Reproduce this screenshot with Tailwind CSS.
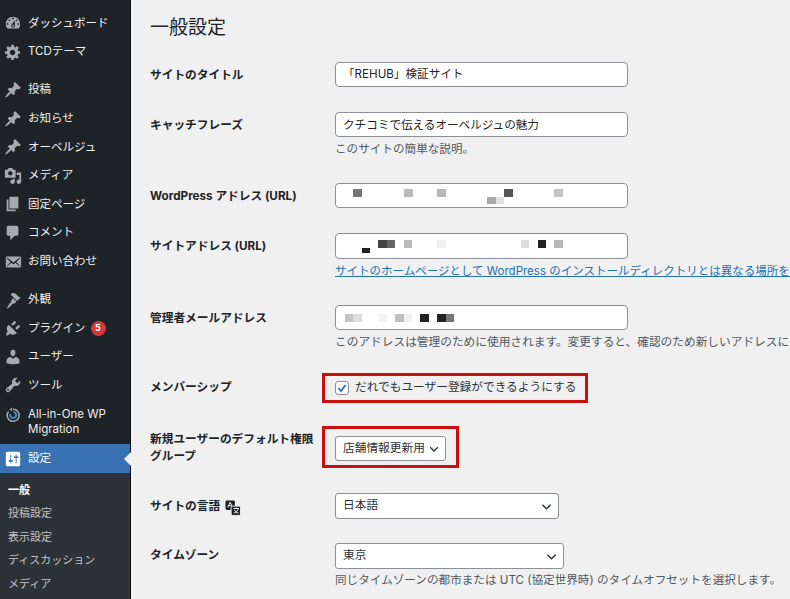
<!DOCTYPE html>
<html lang="ja">
<head>
    <meta charset="UTF-8">
    <title>一般設定</title>
    <script src="https://cdn.jsdelivr.net/npm/@tailwindcss/browser@4"></script>
</head>
<body class="w-[790px] h-[599px] overflow-hidden bg-[#f0f0f1] text-[#1d2327] font-['Inter','Noto_Sans_CJK_JP',sans-serif]">
<div class="flex h-[599px] overflow-hidden">

    <!-- Admin menu -->
    <nav class="w-[131px] shrink-0 h-full bg-[#1d2327] border-r border-[#111] pt-[9px] text-[11.5px] text-[#f0f0f1]">
        <a class="flex items-center h-[28.6px] pl-[4px] gap-[6px]">
            <svg class="w-[18px] h-[18px] shrink-0 text-[#a7aaad]" viewBox="0 0 20 20" fill="currentColor"><path d="M3.76 16h12.48c1.1-1.37 1.76-3.11 1.76-5 0-4.42-3.58-8-8-8s-8 3.58-8 8c0 1.89.66 3.63 1.76 5zM10 4c.55 0 1 .45 1 1s-.45 1-1 1-1-.45-1-1 .45-1 1-1zM6 6c.55 0 1 .45 1 1s-.45 1-1 1-1-.45-1-1 .45-1 1-1zm8 0c.55 0 1 .45 1 1s-.45 1-1 1-1-.45-1-1 .45-1 1-1zm-5.37 5.55L12 7v6c0 1.1-.9 2-2 2s-2-.9-2-2c0-.57.24-1.08.63-1.45zM4 10c.55 0 1 .45 1 1s-.45 1-1 1-1-.45-1-1 .45-1 1-1zm12 0c.55 0 1 .45 1 1s-.45 1-1 1-1-.45-1-1 .45-1 1-1zm-5 3c0-.55-.45-1-1-1s-1 .45-1 1 .45 1 1 1 1-.45 1-1z" fill-rule="evenodd"/></svg>
            <span>ダッシュボード</span>
        </a>
        <a class="flex items-center h-[28.6px] pl-[4px] gap-[6px]">
            <svg class="w-[18px] h-[18px] shrink-0 text-[#a7aaad]" viewBox="0 0 20 20" fill="currentColor"><path d="M18 12h-2.18c-.17.7-.44 1.35-.81 1.93l1.54 1.54-2.1 2.1-1.54-1.54c-.58.36-1.23.63-1.91.79V19H8v-2.18c-.68-.16-1.33-.43-1.91-.79l-1.54 1.54-2.12-2.12 1.54-1.54c-.36-.58-.63-1.23-.79-1.91H1V9.03h2.17c.16-.7.44-1.35.8-1.94L2.43 5.55l2.1-2.1 1.54 1.54c.58-.37 1.24-.64 1.93-.81V2h3v2.18c.68.16 1.33.43 1.91.79l1.54-1.54 2.12 2.12-1.54 1.54c.36.59.64 1.24.8 1.94H18V12zm-8.5 1.5c1.66 0 3-1.34 3-3s-1.34-3-3-3-3 1.34-3 3 1.34 3 3 3z"/></svg>
            <span>TCDテーマ</span>
        </a>

        <div class="mt-[9.5px]">
            <a class="flex items-center h-[28.6px] pl-[4px] gap-[6px]">
                <svg class="w-[18px] h-[18px] shrink-0 text-[#a7aaad]" viewBox="0 0 20 20" fill="currentColor"><path d="M10.44 3.02l1.82-1.82 6.36 6.35-1.83 1.82c-1.05-.68-2.48-.57-3.41.36l-.75.75c-.92.93-1.04 2.35-.35 3.41l-1.83 1.82-2.41-2.41-2.8 2.79c-.42.42-3.38 2.71-3.8 2.29s1.86-3.39 2.28-3.81l2.79-2.79L4.1 9.36l1.83-1.82c1.05.69 2.48.57 3.4-.36l.75-.75c.93-.92 1.05-2.35.36-3.41z"/></svg>
                <span>投稿</span>
            </a>
            <a class="flex items-center h-[28.6px] pl-[4px] gap-[6px]">
                <svg class="w-[18px] h-[18px] shrink-0 text-[#a7aaad]" viewBox="0 0 20 20" fill="currentColor"><path d="M10.44 3.02l1.82-1.82 6.36 6.35-1.83 1.82c-1.05-.68-2.48-.57-3.41.36l-.75.75c-.92.93-1.04 2.35-.35 3.41l-1.83 1.82-2.41-2.41-2.8 2.79c-.42.42-3.38 2.71-3.8 2.29s1.86-3.39 2.28-3.81l2.79-2.79L4.1 9.36l1.83-1.82c1.05.69 2.48.57 3.4-.36l.75-.75c.93-.92 1.05-2.35.36-3.41z"/></svg>
                <span>お知らせ</span>
            </a>
            <a class="flex items-center h-[28.6px] pl-[4px] gap-[6px]">
                <svg class="w-[18px] h-[18px] shrink-0 text-[#a7aaad]" viewBox="0 0 20 20" fill="currentColor"><path d="M10.44 3.02l1.82-1.82 6.36 6.35-1.83 1.82c-1.05-.68-2.48-.57-3.41.36l-.75.75c-.92.93-1.04 2.35-.35 3.41l-1.83 1.82-2.41-2.41-2.8 2.79c-.42.42-3.38 2.71-3.8 2.29s1.86-3.39 2.28-3.81l2.79-2.79L4.1 9.36l1.83-1.82c1.05.69 2.48.57 3.4-.36l.75-.75c.93-.92 1.05-2.35.36-3.41z"/></svg>
                <span>オーベルジュ</span>
            </a>
            <a class="flex items-center h-[28.6px] pl-[4px] gap-[6px]">
                <svg class="w-[18px] h-[18px] shrink-0 text-[#a7aaad]" viewBox="0 0 20 20" fill="currentColor"><path d="M13 11V4c0-.55-.45-1-1-1h-1.67L9 1H5L3.67 3H2c-.55 0-1 .45-1 1v7c0 .55.45 1 1 1h10c.55 0 1-.45 1-1zM7 4.500c1.380 0 2.500 1.120 2.500 2.500S8.380 9.500 7 9.500 4.500 8.380 4.500 7 5.620 4.500 7 4.500zM14 6h5v10.500c0 1.380-1.120 2.500-2.500 2.500S14 17.880 14 16.500s1.120-2.500 2.500-2.500c.17 0 .34.02.5.05V9h-3V6zm-4 8.050V13h2v3.500c0 1.380-1.120 2.500-2.500 2.500S7 17.880 7 16.500 8.120 14 9.500 14c.17 0 .34.02.5.05z" fill-rule="evenodd"/></svg>
                <span>メディア</span>
            </a>
            <a class="flex items-center h-[28.6px] pl-[4px] gap-[6px]">
                <svg class="w-[18px] h-[18px] shrink-0 text-[#a7aaad]" viewBox="0 0 20 20" fill="currentColor"><path d="M6 15V2h10v13H6zm-1 1h8v2H3V5h2v11z"/></svg>
                <span>固定ページ</span>
            </a>
            <a class="flex items-center h-[28.6px] pl-[4px] gap-[6px]">
                <svg class="w-[18px] h-[18px] shrink-0 text-[#a7aaad]" viewBox="0 0 20 20" fill="currentColor"><path d="M5 2h9c1.100 0 2 .9 2 2v7c0 1.100-.9 2-2 2h-2l-5 5v-5H5c-1.100 0-2-.9-2-2V4c0-1.100.9-2 2-2z"/></svg>
                <span>コメント</span>
            </a>
            <a class="flex items-center h-[28.6px] pl-[4px] gap-[6px]">
                <svg class="w-[18px] h-[18px] shrink-0 text-[#a7aaad]" viewBox="0 0 20 20" fill="currentColor"><path d="M19 14.500v-9c0-.83-.67-1.500-1.500-1.500H3.490c-.83 0-1.500.67-1.500 1.500v9c0 .83.67 1.500 1.500 1.500H17.500c.83 0 1.500-.67 1.500-1.500zm-1.310-9.110c.33.33.15.67-.03.84L13.600 9.950l3.900 4.060c.12.14.2.36.06.51-.13.16-.43.15-.56.05l-4.370-3.730-2.140 1.950-2.130-1.950-4.370 3.730c-.13.1-.43.11-.56-.05-.14-.15-.06-.37.06-.51l3.900-4.060-4.060-3.720c-.18-.17-.36-.51-.03-.84s.67-.17.95.07l6.240 5.040 6.250-5.040c.28-.24.62-.4.95-.07z" fill-rule="evenodd"/></svg>
                <span>お問い合わせ</span>
            </a>
        </div>

        <div class="mt-[9.5px]">
            <a class="flex items-center h-[28.6px] pl-[4px] gap-[6px]">
                <svg class="w-[18px] h-[18px] shrink-0 text-[#a7aaad]" viewBox="0 0 20 20" fill="currentColor"><path d="M14.48 11.06L7.41 3.99l1.5-1.5c.5-.56 2.3-.47 3.51.32 1.21.8 1.43 1.28 2.66 2.42 1.2 1.13 2.2 1.6 3.42 2.17zM13.7 11.8l-1.4 1.4c-.8.8-2 .6-2.8.9-.9.4-1.2 1.500-1.700 2.300-.7 1.100-3.500 2.900-5.100 3.200 1.100-1.500 2.600-4 3.200-5.200.5-.9 1.600-1.200 2-2.100.3-.8.1-2 .9-2.800l1.400-1.400z"/></svg>
                <span>外観</span>
            </a>
            <a class="flex items-center h-[28.6px] pl-[4px] gap-[6px]">
                <svg class="w-[18px] h-[18px] shrink-0 text-[#a7aaad]" viewBox="0 0 20 20" fill="currentColor"><path d="M13.11 4.360L9.870 7.600 8 5.730l3.240-3.240c.35-.34 1.050-.2 1.560.32.52.51.66 1.210.31 1.550zM17.510 8.760l-3.240 3.240-1.870-1.870 3.240-3.240c.35-.34 1.050-.2 1.560.32.52.51.66 1.210.31 1.550zM5.500 6.600l8.900 8.900-1.200.8c-2.200 1.600-4.500 1.500-6.300.1L3.300 18.500 2 17.200l2.100-3.600C2.700 11.800 2.600 9.500 4.200 7.300z"/></svg>
                <span>プラグイン</span>
                <span class="w-[15px] h-[15px] -ml-[1px] rounded-full bg-[#d63638] text-white text-[9px] font-bold flex items-center justify-center">5</span>
            </a>
            <a class="flex items-center h-[28.6px] pl-[4px] gap-[6px]">
                <svg class="w-[18px] h-[18px] shrink-0 text-[#a7aaad]" viewBox="0 0 20 20" fill="currentColor"><path d="M10 9.250c-2.270 0-2.730-3.440-2.730-3.440C7 4.020 7.820 2 9.970 2c2.160 0 2.980 2.020 2.710 3.810 0 0-.41 3.440-2.680 3.440zm0 2.570L12.720 10c2.390 0 4.520 2.330 4.520 4.530v2.490s-3.650 1.130-7.240 1.130c-3.650 0-7.240-1.130-7.240-1.130v-2.490c0-2.250 1.940-4.480 4.470-4.480z"/></svg>
                <span>ユーザー</span>
            </a>
            <a class="flex items-center h-[28.6px] pl-[4px] gap-[6px]">
                <svg class="w-[18px] h-[18px] shrink-0 text-[#a7aaad]" viewBox="0 0 20 20" fill="currentColor"><path d="M16.680 9.770c-1.340 1.340-3.300 1.670-4.950.99l-5.410 6.520c-.99.99-2.590.99-3.580 0s-.99-2.590 0-3.570l6.520-5.420c-.68-1.650-.35-3.610.99-4.950 1.280-1.280 3.120-1.620 4.720-1.060l-2.890 2.890 2.820 2.820 2.860-2.860c.53 1.580.18 3.390-1.080 4.640zM3.810 16.210c.4.39 1.030.39 1.420 0 .4-.4.4-1.030 0-1.430-.39-.39-1.020-.39-1.420 0-.39.4-.39 1.030 0 1.430z" fill-rule="evenodd"/></svg>
                <span>ツール</span>
            </a>
            <a class="flex h-[44.7px] pl-[5px] gap-[7px] pt-[7px] leading-[15px]">
                <svg class="w-[16px] h-[16px] shrink-0" viewBox="0 0 16 16" fill="none"><path d="M3.500 4.500A6 6 0 1 0 8 2.300" stroke="#a7aaad" stroke-width="1.500"/><path d="M8.500 5a3 3 0 1 1-3.200 2" stroke="#3f8ed0" stroke-width="2"/><path d="M7 .6v3.600l-2.600-1.800z" fill="#a7aaad"/></svg>
                <span>All-in-One WP<br>Migration</span>
            </a>
        </div>

        <a class="relative flex items-center h-[28.6px] pl-[4px] gap-[6px] bg-[#3872b2] text-white">
            <svg class="w-[18px] h-[18px] shrink-0 text-white" viewBox="0 0 20 20" fill="currentColor"><path d="M18 16V4c0-1.100-.9-2-2-2H4c-1.100 0-2 .9-2 2v12c0 1.100.9 2 2 2h12c1.100 0 2-.9 2-2zM8 11h1c.55 0 1 .45 1 1s-.45 1-1 1H8v1.500c0 .28-.22.5-.5.5s-.5-.22-.5-.5V13H6c-.55 0-1-.45-1-1s.45-1 1-1h1V5.500c0-.28.22-.5.5-.5s.5.22.5.5V11zm5-2h-1c-.55 0-1-.45-1-1s.45-1 1-1h1V5.500c0-.28.22-.5.5-.5s.5.22.5.5V7h1c.55 0 1 .45 1 1s-.45 1-1 1h-1v5.500c0 .28-.22.5-.5.5s-.5-.22-.5-.5V9z" fill-rule="evenodd"/></svg>
            <span>設定</span>
            <span class="absolute right-[-1px] top-1/2 -translate-y-1/2 border-y-[7px] border-y-transparent border-r-[7px] border-r-[#f0f0f1]"></span>
        </a>
        <div class="bg-[#2c3338] pt-[5px] text-[11px] text-[#c3c4c7] h-[200px]">
            <a class="flex items-center h-[23.5px] pl-[8px] font-bold text-white">一般</a>
            <a class="flex items-center h-[23.5px] pl-[8px]">投稿設定</a>
            <a class="flex items-center h-[23.5px] pl-[8px]">表示設定</a>
            <a class="flex items-center h-[23.5px] pl-[8px]">ディスカッション</a>
            <a class="flex items-center h-[23.5px] pl-[8px]">メディア</a>
        </div>
    </nav>

    <!-- Settings form -->
    <main class="flex-1 min-w-0 pl-[19px] text-[11.7px]">
        <h1 class="h-[50px] pt-[14px] text-[19px] leading-[28px] font-normal">一般設定</h1>

        <div class="flex h-[50px] pt-[12px]">
            <label class="w-[185px] shrink-0 pt-[4px] font-bold leading-[18px]">サイトのタイトル</label>
            <div class="w-[293px] h-[25px] px-[7px] leading-[23px] text-[11.6px] bg-white border border-[#8c8f94] rounded-[4px] whitespace-nowrap">「REHUB」検証サイト</div>
        </div>

        <div class="flex h-[71px] pt-[12px]">
            <label class="w-[185px] shrink-0 pt-[4px] font-bold leading-[18px]">キャッチフレーズ</label>
            <div>
                <div class="w-[293px] h-[25px] px-[7px] leading-[24px] text-[11.6px] bg-white border border-[#8c8f94] rounded-[4px] whitespace-nowrap">クチコミで伝えるオーベルジュの魅力</div>
                <p class="mt-[4px] text-[11.6px] leading-[16px] text-[#50575e]">このサイトの簡単な説明。</p>
            </div>
        </div>

        <div class="flex h-[50px] pt-[12px]">
            <label class="w-[185px] shrink-0 pt-[4px] font-bold leading-[18px]">WordPress アドレス (URL)</label>
            <div class="relative w-[293px] h-[25px] bg-white border border-[#8c8f94] rounded-[4px]">
                <span class="absolute left-[17px] top-[5px] w-[9px] h-[8px] bg-[#777]"></span>
                <span class="absolute left-[68px] top-[5px] w-[9px] h-[8px] bg-[#bbb]"></span>
                <span class="absolute left-[101px] top-[5px] w-[9px] h-[8px] bg-[#b8b8b8]"></span>
                <span class="absolute left-[168px] top-[5px] w-[9px] h-[8px] bg-[#555]"></span>
                <span class="absolute left-[151px] top-[13px] w-[9px] h-[7px] bg-[#aaa]"></span>
                <span class="absolute left-[160px] top-[13px] w-[8px] h-[7px] bg-[#e0e0e0]"></span>
                <span class="absolute left-[218px] top-[5px] w-[9px] h-[8px] bg-[#c4c4c4]"></span>
            </div>
        </div>

        <div class="flex h-[72px] pt-[12px]">
            <label class="w-[185px] shrink-0 pt-[4px] font-bold leading-[18px]">サイトアドレス (URL)</label>
            <div>
                <div class="relative w-[293px] h-[26px] bg-white border border-[#8c8f94] rounded-[4px]">
                    <span class="absolute left-[42px] top-[6px] w-[9px] h-[8px] bg-[#444]"></span>
                    <span class="absolute left-[51px] top-[6px] w-[8px] h-[8px] bg-[#666]"></span>
                    <span class="absolute left-[68px] top-[6px] w-[8px] h-[8px] bg-[#bbb]"></span>
                    <span class="absolute left-[101px] top-[6px] w-[9px] h-[8px] bg-[#f0f0f0]"></span>
                    <span class="absolute left-[26px] top-[14px] w-[8px] h-[5px] bg-[#222]"></span>
                    <span class="absolute left-[185px] top-[6px] w-[8px] h-[8px] bg-[#ddd]"></span>
                    <span class="absolute left-[202px] top-[6px] w-[8px] h-[8px] bg-[#222]"></span>
                    <span class="absolute left-[218px] top-[6px] w-[9px] h-[8px] bg-[#b8b8b8]"></span>
                </div>
                <a class="block mt-[4px] text-[11.5px] leading-[16px] text-[#2271b1] underline whitespace-nowrap">サイトのホームページとして WordPress のインストールディレクトリとは異なる場所を設定する場合は、ここにアドレスを入力してください。</a>
            </div>
        </div>

        <div class="flex h-[69px] pt-[12px]">
            <label class="w-[185px] shrink-0 pt-[4px] font-bold leading-[18px]">管理者メールアドレス</label>
            <div>
                <div class="relative w-[293px] h-[25px] bg-white border border-[#8c8f94] rounded-[4px]">
                    <span class="absolute left-[9px] top-[8px] w-[8px] h-[8px] bg-[#c4c4c4]"></span>
                    <span class="absolute left-[17px] top-[8px] w-[9px] h-[8px] bg-[#ddd]"></span>
                    <span class="absolute left-[42px] top-[8px] w-[9px] h-[8px] bg-[#f3f3f3]"></span>
                    <span class="absolute left-[59px] top-[8px] w-[9px] h-[8px] bg-[#c0c0c0]"></span>
                    <span class="absolute left-[68px] top-[8px] w-[8px] h-[8px] bg-[#f0f0f0]"></span>
                    <span class="absolute left-[84px] top-[8px] w-[9px] h-[8px] bg-[#222]"></span>
                    <span class="absolute left-[101px] top-[8px] w-[9px] h-[8px] bg-[#222]"></span>
                    <span class="absolute left-[110px] top-[8px] w-[8px] h-[8px] bg-[#777]"></span>
                </div>
                <p class="mt-[4px] text-[11.7px] leading-[16px] text-[#50575e] whitespace-nowrap">このアドレスは管理のために使用されます。変更すると、確認のため新しいアドレスにメールを送信します。</p>
            </div>
        </div>

        <div class="flex h-[64px] pt-[11px] items-start">
            <label class="w-[185px] shrink-0 pt-[5px] font-bold leading-[18px]">メンバーシップ</label>
            <div class="-ml-[13px] w-[266px] h-[30px] flex items-center gap-[6px] pl-[10px] border-[3px] border-[#c8100f] whitespace-nowrap text-[#2c3338]">
                <span class="w-[14px] h-[14px] shrink-0 bg-white border border-[#8c8f94] rounded-[3px] flex items-center justify-center">
                    <svg class="w-[12px] h-[12px]" viewBox="0 0 12 12" fill="none" stroke="#2271b1" stroke-width="1.8"><path d="M2.500 6l2.500 3 4.500-6"/></svg>
                </span>
                <span>だれでもユーザー登録ができるようにする</span>
            </div>
        </div>

        <div class="flex h-[67px] items-start">
            <label class="w-[185px] shrink-0 pt-[5px] font-bold leading-[17px]">新規ユーザーのデフォルト権限<br>グループ</label>
            <div class="-ml-[13px] w-[137px] h-[42px] pt-[7px] pl-[10px] border-[3px] border-[#c8100f]">
                <div class="w-[111px] h-[25px] pl-[7px] pr-[6px] flex items-center justify-between bg-white border border-[#8c8f94] rounded-[3px] text-[#2c3338] whitespace-nowrap">
                    <span>店舗情報更新用</span>
                    <svg class="w-[10px] h-[10px] shrink-0" viewBox="0 0 12 12" fill="none" stroke="#2c3338" stroke-width="1.6"><path d="M1.500 4l4.500 4.500L10.500 4"/></svg>
                </div>
            </div>
        </div>

        <div class="flex h-[50px]">
            <label class="w-[185px] shrink-0 pt-[4px] font-bold leading-[18px] flex items-start gap-[5px]">
                サイトの言語
                <svg class="w-[16px] h-[16px] mt-[3px]" viewBox="0 0 17 17"><rect x="0.5" y="0.5" width="10" height="10" rx="1.5" fill="#1d2327"/><rect x="6.5" y="6.5" width="10" height="10" rx="1.5" fill="#1d2327" stroke="#f0f0f1"/><path d="M3 8l2.300-5.500L7.500 6M4 6h3M9 9h6M12 8v1M14 9.500c-.6 2.500-2.500 4-4.500 4.500M10 10.500c.8 1.800 2.500 3 4.500 3.500" stroke="#fff" fill="none"/></svg>
            </label>
            <div class="w-[224px] h-[26px] pl-[7px] pr-[6px] flex items-center justify-between bg-white border border-[#8c8f94] rounded-[3px] text-[#2c3338]">
                <span>日本語</span>
                <svg class="w-[11px] h-[11px] shrink-0" viewBox="0 0 12 12" fill="none" stroke="#2c3338" stroke-width="1.6"><path d="M1.500 4l4.500 4.500L10.500 4"/></svg>
            </div>
        </div>

        <div class="flex">
            <label class="w-[185px] shrink-0 pt-[3px] font-bold leading-[18px]">タイムゾーン</label>
            <div>
                <div class="w-[229px] h-[26px] pl-[7px] pr-[6px] flex items-center justify-between bg-white border border-[#8c8f94] rounded-[3px] text-[#2c3338]">
                    <span>東京</span>
                    <svg class="w-[11px] h-[11px] shrink-0" viewBox="0 0 12 12" fill="none" stroke="#2c3338" stroke-width="1.6"><path d="M1.500 4l4.500 4.500L10.500 4"/></svg>
                </div>
                <p class="mt-[3px] text-[11.6px] leading-[16px] text-[#50575e] whitespace-nowrap">同じタイムゾーンの都市または UTC (協定世界時) のタイムオフセットを選択します。</p>
            </div>
        </div>
    </main>
</div>
</body>
</html>
